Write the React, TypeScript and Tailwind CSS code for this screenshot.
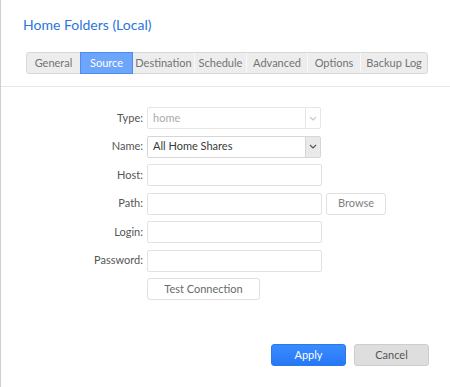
import type { ReactNode } from "react"

type Tab = { label: string; width: string; active?: boolean }

const TABS: Tab[] = [
  { label: "General", width: "w-[53px]" },
  { label: "Source", width: "w-[53px]", active: true },
  { label: "Destination", width: "w-[61px]" },
  { label: "Schedule", width: "w-[52px]" },
  { label: "Advanced", width: "w-[61px]" },
  { label: "Options", width: "w-[53px]" },
  { label: "Backup Log", width: "w-[67px]" }
]

const Chevron = ({ className }: { className: string }) => (
  <svg width="8" height="5" viewBox="0 0 8 5" className={className}>
    <path d="M1 1 L4 4 L7 1" fill="none" stroke="currentColor" strokeWidth="1.2" />
  </svg>
)

function Row({ label, children }: { label: string; children: ReactNode }) {
  return (
    <div className="flex h-[22px] items-center">
      <span className="w-[146px] pr-[4px] text-right text-[#555]">{label}</span>
      {children}
    </div>
  )
}

const inputCls = "h-[22px] w-[175px] rounded-[2px] border border-[#e2e2e2] bg-white"

export default function App() {
  return (
    <div
      className="flex h-[387px] w-[450px] flex-col border-l border-[#cfcfcf] bg-white text-[11px]"
      style={{ fontFamily: "Lato, 'Open Sans', sans-serif" }}
    >
      <h1 className="ml-[22px] mt-[15px] text-[14px] leading-[20px] text-[#2a76dc]">
        Home Folders (Local)
      </h1>

      <div className="ml-[25px] mt-[17px] flex h-[22px] w-fit rounded-[3px] border border-[#d8d8d8] bg-[#ededed]">
        {TABS.map((tab, i) => (
          <div
            key={tab.label}
            className={`${tab.width} flex items-center justify-center ${
              tab.active
                ? "-my-px border border-[#4b8cf3] bg-[#6da5fb] text-white"
                : `text-[#737373] ${i > 0 && !TABS[i - 1].active ? "border-l border-[#f9f9f9]" : ""}`
            }`}
          >
            {tab.label}
          </div>
        ))}
      </div>

      <div className="mt-[12px] h-px w-full bg-[#e6e6e6]" />

      <div className="mt-[20px] flex flex-col gap-[6.55px]">
        <Row label="Type:">
          <div className="flex h-[22px] w-[174px] rounded-[2px] border border-[#e6e6e6]">
            <span className="flex flex-1 items-center pl-[5px] text-[#aaa]">home</span>
            <span className="flex w-[15px] items-center justify-center border-l border-[#e6e6e6]">
              <Chevron className="text-[#c8c8c8]" />
            </span>
          </div>
        </Row>
        <Row label="Name:">
          <div className="flex h-[22px] w-[174px] rounded-[2px] border border-[#d6d6d6]">
            <span className="flex flex-1 items-center pl-[5px] text-[#3a3a3a]">All Home Shares</span>
            <span className="flex w-[15px] items-center justify-center border-l border-[#d6d6d6] bg-[#e9e9e9]">
              <Chevron className="text-[#555]" />
            </span>
          </div>
        </Row>
        <Row label="Host:">
          <div className={inputCls} />
        </Row>
        <Row label="Path:">
          <div className={inputCls} />
          <button className="ml-[4px] h-[22px] w-[60px] rounded-[3px] border border-[#e0e0e0] bg-white text-[#808080]">
            Browse
          </button>
        </Row>
        <Row label="Login:">
          <div className={inputCls} />
        </Row>
        <Row label="Password:">
          <div className={inputCls} />
        </Row>
        <div className="flex h-[22px] items-center">
          <span className="w-[146px]" />
          <button className="h-[22px] w-[113px] rounded-[3px] border border-[#e0e0e0] bg-white text-[#6a6a6a]">
            Test Connection
          </button>
        </div>
      </div>

      <div className="mt-[44px] flex justify-end gap-[8px] pr-[21px]">
        <button className="h-[22px] w-[75px] rounded-[3px] border border-[#2a78ee] bg-gradient-to-b from-[#3b8bff] to-[#2677f5] text-white">
          Apply
        </button>
        <button className="h-[22px] w-[75px] rounded-[3px] border border-[#cdcdcd] bg-[#dedede] text-[#555]">
          Cancel
        </button>
      </div>
    </div>
  )
}
